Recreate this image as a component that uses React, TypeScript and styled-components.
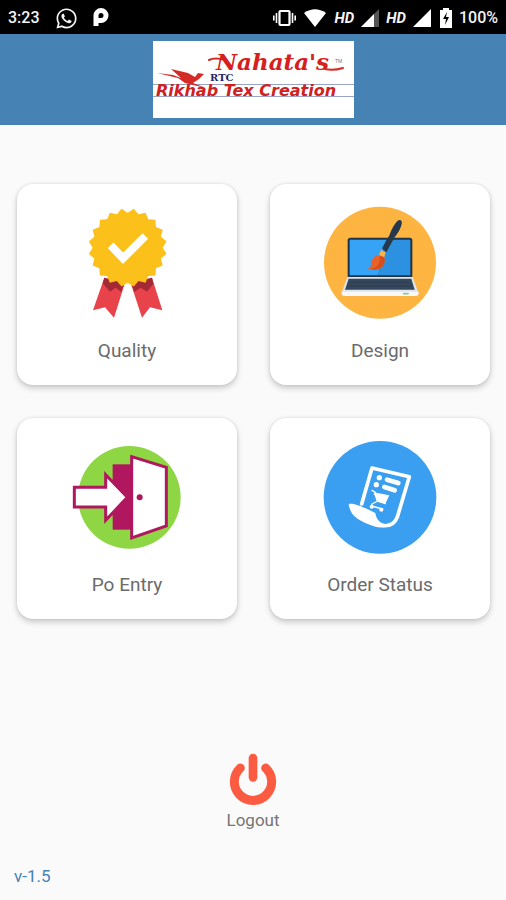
import React from 'react';
import styled, { createGlobalStyle } from 'styled-components';
import { FaWhatsapp } from 'react-icons/fa';

const GlobalStyle = createGlobalStyle`
  * { box-sizing: border-box; }
  body { margin: 0; background: #fafafa; font-family: Roboto, sans-serif; }
  button { font: inherit; border: 0; cursor: pointer; }
`;

const Screen = styled.div`
  display: flex;
  flex-direction: column;
  min-height: 100vh;
`;

const StatusBar = styled.div`
  display: flex;
  align-items: center;
  justify-content: space-between;
  height: 34px;
  padding: 2px 8px 0;
  background: #000;
  color: #f4f4f4;
  font-size: 16px;
  font-weight: 500;
  line-height: 20px;
`;

const StatusGroup = styled.div<{ $gap: number }>`
  display: flex;
  align-items: center;
  gap: ${({ $gap }) => $gap}px;
  svg { display: block; }
`;

const Network = styled.span`
  font-style: italic;
  font-weight: 700;
  font-size: 15px;
`;

const Header = styled.header`
  display: flex;
  justify-content: center;
  padding: 7px 16px;
  background: #4682b4;
`;

const Logo = styled.svg`
  display: block;
  width: 201px;
  height: 77px;
  background: #fff;
`;

const Menu = styled.main`
  display: grid;
  grid-template-columns: 1fr 1fr;
  gap: 33px;
  padding: 59px 16px 32px 17px;
`;

const Card = styled.button`
  display: flex;
  flex-direction: column;
  align-items: center;
  gap: 14px;
  padding: 11px 8px 22px;
  border-radius: 16px;
  background: #fff;
  color: #6b6b6b;
  box-shadow: 0 3px 6px rgba(0, 0, 0, 0.2), 0 0 3px rgba(0, 0, 0, 0.1);
`;

const CardIcon = styled.svg`
  display: block;
  width: 120px;
  height: 130px;
`;

const CardLabel = styled.span`
  font-size: 19px;
  line-height: 24px;
`;

const LogoutButton = styled.button`
  display: flex;
  flex-direction: column;
  align-items: center;
  align-self: center;
  margin-top: auto;
  padding: 0;
  background: none;
  color: #757575;
  font-size: 17px;
  line-height: 20px;
`;

const LogoutIcon = styled.svg`
  display: block;
  width: 60px;
  height: 60px;
`;

const Version = styled.footer`
  padding: 36px 14px 14px;
  color: #4682b4;
  font-size: 17px;
  line-height: 20px;
`;

const sealPoints = Array.from({ length: 40 }, (_, i) => {
  const radius = i % 2 ? 118 : 105;
  const angle = (i * 9 * Math.PI) / 180;
  return `${(173 + radius * Math.sin(angle)).toFixed(1)},${(158 - radius * Math.cos(angle)).toFixed(1)}`;
}).join(' ');

function QualityIcon() {
  return (
    <CardIcon viewBox="-9 0 360 390" aria-hidden="true">
      <path d="M103 248 69 346 105 337 132 368 163 270Z" fill="#e8434a" />
      <path d="M246 248 277 346 240 337 216 368 184 270Z" fill="#e8434a" />
      <path d="M103 248 98 265 120 290 137 278 154 291 163 262Z" fill="#a32a35" />
      <path d="M246 248 250 266 231 290 212 278 192 291 184 262Z" fill="#a32a35" />
      <polygon points={sealPoints} fill="#fcc01a" />
      <path d="M122 151 159 190 226 123" fill="none" stroke="#fff" strokeWidth="24" />
    </CardIcon>
  );
}

function DesignIcon() {
  return (
    <CardIcon viewBox="15 0 360 390" aria-hidden="true">
      <circle cx="195" cy="203" r="168" fill="#fdb441" />
      <rect x="98" y="128" width="194" height="122" rx="8" fill="#213446" />
      <path d="M104 134H213L190 241H104Z" fill="#36a3f7" />
      <path d="M213 134H286V241H190Z" fill="#2b91e0" />
      <path d="M97 246H293L310 292H80Z" fill="#dfe4e8" />
      <path d="M101 251H289L299 284H90Z" fill="#34475c" />
      <path d="M106 262H284M100 273H290" stroke="#2c3d50" strokeWidth="3" />
      <path d="M80 290H311V297Q310 303 302 303H89Q81 303 80 297Z" fill="#f7f8fa" />
      <path d="M264 296H281" stroke="#72cba9" strokeWidth="5" />
      <path d="M198 165 212 172 207 190 191 183Z" fill="#f5b548" />
      <path d="M201 160 224 119C230 101 241 83 248 77C256 71 263 77 260 88C257 101 249 115 238 128L214 172Z" fill="#26394c" />
      <path d="M190 181C199 181 208 186 209 193C211 219 188 231 158 221C173 217 166 207 171 196C174 187 181 181 190 181Z" fill="#e9622a" />
      <path d="M193 186C197 205 188 218 167 222C190 229 211 216 209 193C208 185 199 181 193 186Z" fill="#d84e1b" />
    </CardIcon>
  );
}

function EntryIcon() {
  return (
    <CardIcon viewBox="21 -18 360 390" aria-hidden="true">
      <circle cx="208" cy="187" r="154" fill="#8fd644" />
      <rect x="158" y="88" width="60" height="196" fill="#b0175e" />
      <path d="M215 65 319 97V273L215 309Z" fill="#fff" stroke="#b0175e" strokeWidth="9" />
      <circle cx="239" cy="187" r="9" fill="#b0175e" />
      <path d="M43 157H137V119L202 187 137 256V216H43Z" fill="#fff" stroke="#b0175e" strokeWidth="9" />
    </CardIcon>
  );
}

function OrderIcon() {
  return (
    <CardIcon viewBox="15 -18 360 390" aria-hidden="true">
      <circle cx="195" cy="187" r="169" fill="#3a9ff0" />
      <g fill="none" stroke="#fff" strokeLinecap="round" strokeLinejoin="round">
        <path d="M140 207 171 99 283 125 247 246Q236 274 207 272" strokeWidth="11" />
        <path d="M216 134 250 144M208 156 239 166" strokeWidth="14" />
        <path d="M171 166 180 171 190 199 211 206M178 178 216 186 208 201M188 198 171 207 169 213 203 222" strokeWidth="4" />
      </g>
      <path d="M176 172 223 181 211 206 185 199Z" fill="#fff" />
      <g fill="#fff">
        <circle cx="193" cy="128" r="8" />
        <circle cx="184" cy="149" r="8" />
        <circle cx="170" cy="215" r="6" />
        <circle cx="199" cy="224" r="6" />
        <path d="M101 207C116 203 141 214 181 234C184 250 190 262 207 266L208 277C189 280 173 272 151 264C122 251 105 237 101 207Z" />
      </g>
    </CardIcon>
  );
}

function Signal({ weak = false }: { weak?: boolean }) {
  return (
    <svg width="18" height="18" viewBox="0 0 18 18" aria-hidden="true">
      <path d="M18 0V18H0Z" fill={weak ? '#555' : '#fff'} />
      {weak && <path d="M13 5V18H0Z" fill="#fff" />}
    </svg>
  );
}

function BrandLogo() {
  return (
    <Logo viewBox="0 0 201 77" role="img" aria-label="Nahata's RTC Rikhab Tex Creation">
      <path d="M0 43.5H201M0 55.5H201" stroke="#9aa3c8" />
      <path d="M4 32 20 34 28 37 18 28 35 32 42 36 45 32 51 33 49 35 46 38 40 42 53 47 40 44 32 42 25 37Z" fill="#d52b27" />
      <path d="M56 19Q62 16 72 19M172 28Q180 30 190 27" fill="none" stroke="#d52b27" strokeWidth="2" strokeLinecap="round" />
      <text x="63" y="29" fill="#d5201d" fontFamily="'DejaVu Serif', serif" fontSize="23" fontStyle="italic" fontWeight="700">Nahata's</text>
      <text x="182" y="22" fill="#777" fontFamily="'Liberation Sans', sans-serif" fontSize="5">TM</text>
      <text x="57" y="40" fill="#24266c" fontFamily="'DejaVu Serif', serif" fontSize="10" fontWeight="700">RTC</text>
      <text x="3" y="55" fill="#cf211e" fontFamily="'DejaVu Sans', sans-serif" fontSize="16" fontStyle="italic" fontWeight="700">Rikhab Tex Creation</text>
    </Logo>
  );
}

const menuItems = [
  { label: 'Quality', Icon: QualityIcon },
  { label: 'Design', Icon: DesignIcon },
  { label: 'Po Entry', Icon: EntryIcon },
  { label: 'Order Status', Icon: OrderIcon },
];

export default function App() {
  return (
    <>
      <GlobalStyle />
      <Screen>
        <StatusBar>
          <StatusGroup $gap={15}>
            <span>3:23</span>
            <FaWhatsapp size={23} aria-hidden="true" />
            <svg width="16" height="20" viewBox="0 0 16 20" aria-hidden="true">
              <path d="M3 18V7.500A5 5 0 1 1 8 12.500H5" fill="none" stroke="#fff" strokeWidth="5" />
            </svg>
          </StatusGroup>
          <StatusGroup $gap={7}>
            <svg width="24" height="18" viewBox="0 0 24 18" aria-hidden="true">
              <rect x="7.500" y="2" width="10" height="14" rx="1" fill="none" stroke="#fff" strokeWidth="2.200" />
              <path d="M4.500 4V14M20.500 4V14M1.800 6.500V11.500M23.200 6.500V11.500" stroke="#fff" strokeWidth="1.600" />
            </svg>
            <svg width="24" height="18" viewBox="0 0 24 18" aria-hidden="true">
              <path d="M1 4Q12-3.500 23 4L12 18Z" fill="#fff" />
            </svg>
            <Network>HD</Network>
            <Signal weak />
            <Network>HD</Network>
            <Signal />
            <svg width="14" height="20" viewBox="0 0 14 20" aria-hidden="true">
              <path d="M5 0H11V2H14V20H2V2H5Z" fill="#fff" />
              <path d="M9 4 5 11H8L7 17 11 9H8Z" fill="#000" />
            </svg>
            <span>100%</span>
          </StatusGroup>
        </StatusBar>
        <Header>
          <BrandLogo />
        </Header>
        <Menu>
          {menuItems.map(({ label, Icon }) => (
            <Card key={label} type="button">
              <Icon />
              <CardLabel>{label}</CardLabel>
            </Card>
          ))}
        </Menu>
        <LogoutButton type="button">
          <LogoutIcon viewBox="40 30 180 180" aria-hidden="true">
            <g fill="none" stroke="#fb5b41" strokeLinecap="round">
              <path d="M92 84A56 56 0 1 0 168 84" strokeWidth="27" />
              <path d="M130 54V112" strokeWidth="26" />
            </g>
          </LogoutIcon>
          Logout
        </LogoutButton>
        <Version>v-1.5</Version>
      </Screen>
    </>
  );
}
